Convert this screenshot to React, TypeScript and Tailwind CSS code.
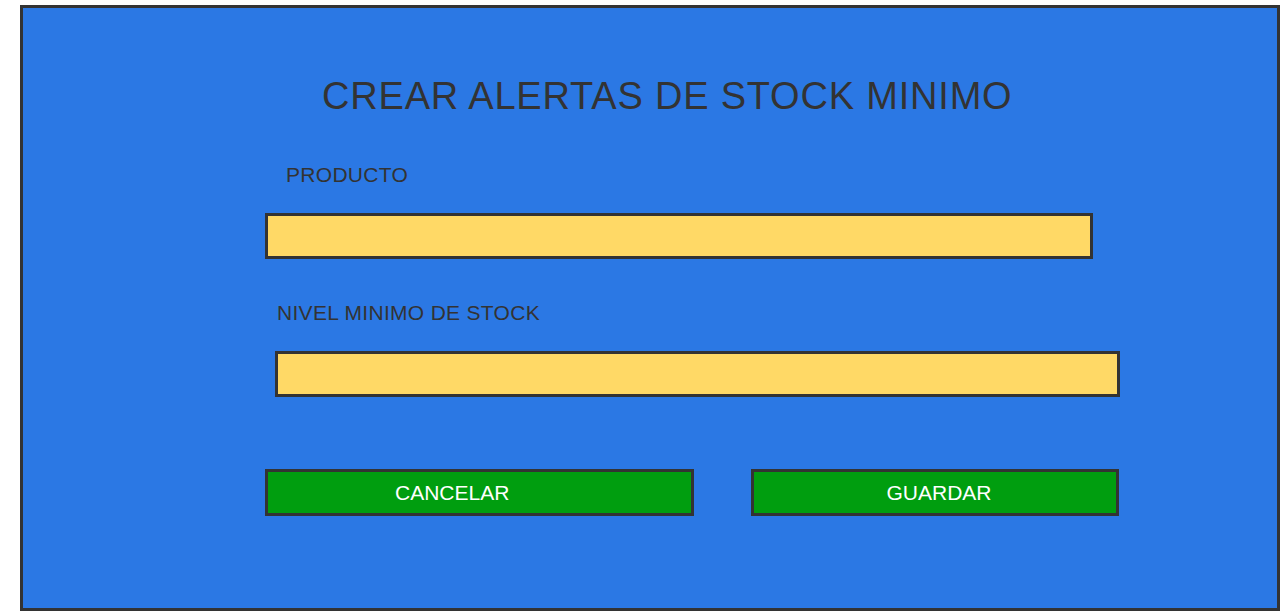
import React from 'react';

const font = { fontFamily: '"Liberation Sans", Arial, sans-serif' };

const Corners: React.FC = () => (
  <>
    <span className="absolute -left-[3px] -top-[3px] h-[3px] w-[2px] bg-[#333]" />
    <span className="absolute -right-[3px] -top-[3px] h-[3px] w-[2px] bg-[#333]" />
    <span className="absolute -left-[3px] -bottom-[3px] h-[3px] w-[2px] bg-[#333]" />
    <span className="absolute -right-[3px] -bottom-[3px] h-[3px] w-[2px] bg-[#333]" />
  </>
);

const Field: React.FC<{ label: string; labelIndent: string; className: string }> = ({ label, labelIndent, className }) => (
  <div className="flex flex-col gap-[28px]">
    <label className={`block h-[21px] text-[21px] leading-[21px] tracking-[0.3px] text-[#333] ${labelIndent}`}>{label}</label>
    <div className={`relative h-[46px] border-[3px] border-[#333] bg-[#FFD966] ${className}`}>
      <Corners />
    </div>
  </div>
);

const App: React.FC = () => {
  return (
    <div className="h-[613px] w-full overflow-hidden bg-white" style={font}>
      <div className="ml-[20px] mt-[5px] flex h-[606px] w-[1260px] flex-col border-[3px] border-[#333] bg-[#2B78E4] pt-[69px]">
        <h1 className="ml-[299px] h-[38px] text-[38px] font-normal leading-[38px] tracking-[0.8px] text-[#333]">
          CREAR ALERTAS DE STOCK MINIMO
        </h1>

        <div className="mt-[49px] flex flex-col gap-[43px]">
          <Field label="PRODUCTO" labelIndent="ml-[263px]" className="ml-[242px] w-[828px]" />
          <Field label="NIVEL MINIMO DE STOCK" labelIndent="ml-[254px]" className="ml-[252px] w-[845px]" />
        </div>

        <div className="ml-[242px] mt-[72px] flex gap-[57px]">
          <button className="relative flex h-[47px] w-[429px] items-center border-[3px] border-[#333] bg-[#009E0F] pl-[127px] text-[21px] text-white">
            <Corners />
            CANCELAR
          </button>
          <button className="relative flex h-[47px] w-[368px] items-center justify-center border-[3px] border-[#333] bg-[#009E0F] pl-[8px] text-[21px] text-white">
            <Corners />
            GUARDAR
          </button>
        </div>
      </div>
    </div>
  );
};

export default App;
